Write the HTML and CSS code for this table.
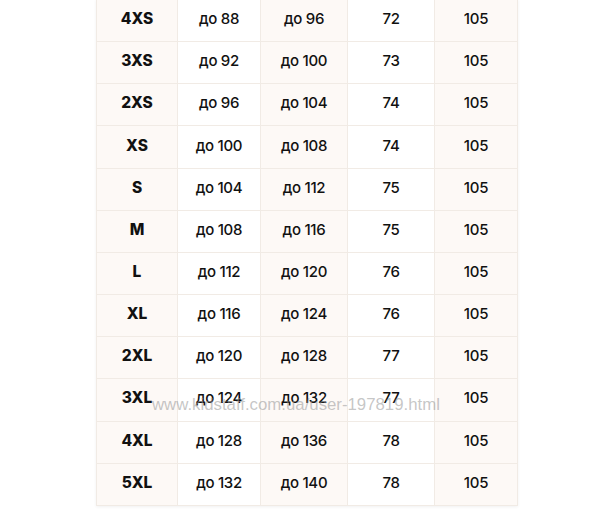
FILE: index.html
```html
<!DOCTYPE html>
<html>
<head>
<meta charset="utf-8">
<link rel="stylesheet" href="styles.css">
</head>
<body>
<div class="page">
  <div class="sizes">
    <div class="c b">4XS</div><div class="c w">до 88</div><div class="c">до 96</div><div class="c w">72</div><div class="c">105</div>
    <div class="c b">3XS</div><div class="c w">до 92</div><div class="c">до 100</div><div class="c w">73</div><div class="c">105</div>
    <div class="c b">2XS</div><div class="c w">до 96</div><div class="c">до 104</div><div class="c w">74</div><div class="c">105</div>
    <div class="c b">XS</div><div class="c w">до 100</div><div class="c">до 108</div><div class="c w">74</div><div class="c">105</div>
    <div class="c b">S</div><div class="c w">до 104</div><div class="c">до 112</div><div class="c w">75</div><div class="c">105</div>
    <div class="c b">M</div><div class="c w">до 108</div><div class="c">до 116</div><div class="c w">75</div><div class="c">105</div>
    <div class="c b">L</div><div class="c w">до 112</div><div class="c">до 120</div><div class="c w">76</div><div class="c">105</div>
    <div class="c b">XL</div><div class="c w">до 116</div><div class="c">до 124</div><div class="c w">76</div><div class="c">105</div>
    <div class="c b">2XL</div><div class="c w">до 120</div><div class="c">до 128</div><div class="c w">77</div><div class="c">105</div>
    <div class="c b">3XL</div><div class="c w">до 124</div><div class="c">до 132</div><div class="c w">77</div><div class="c">105</div>
    <div class="c b">4XL</div><div class="c w">до 128</div><div class="c">до 136</div><div class="c w">78</div><div class="c">105</div>
    <div class="c b">5XL</div><div class="c w">до 132</div><div class="c">до 140</div><div class="c w">78</div><div class="c">105</div>
  </div>
  <div class="watermark">www.kidstaff.com.ua/user-197819.html</div>
</div>
</body>
</html>
```
FILE: styles.css
```css
html, body {
  margin: 0;
  padding: 0;
  background: #ffffff;
}
.page {
  position: relative;
  width: 600px;
  height: 511px;
  overflow: hidden;
}
.sizes {
  margin: -1px 0 0 96px;
  width: 422px;
  box-sizing: border-box;
  display: grid;
  grid-template-columns: 80px 82px 86px 86px 82px;
  grid-auto-rows: 41.17px;
  gap: 1px;
  padding: 1px;
  background: #f1ebe5;
  box-shadow: 0 1px 3px rgba(0,0,0,0.06);
  font-family: Inter, "Open Sans", "Liberation Sans", sans-serif;
  font-size: 15px;
  font-weight: 500;
  color: #111111;
}
.c {
  background: #fdf9f6;
  display: flex;
  align-items: center;
  justify-content: center;
  padding-bottom: 4px;
  box-sizing: border-box;
  letter-spacing: -0.3px;
}
.c.w {
  background: #ffffff;
}
.c.b {
  font-weight: 800;
  font-size: 15.5px;
  letter-spacing: 0;
}
.watermark {
  position: absolute;
  left: 152px;
  top: 395px;
  font-family: "Liberation Sans", Arial, sans-serif;
  font-size: 16.8px;
  color: rgba(150, 150, 150, 0.55);
  white-space: nowrap;
}
```
